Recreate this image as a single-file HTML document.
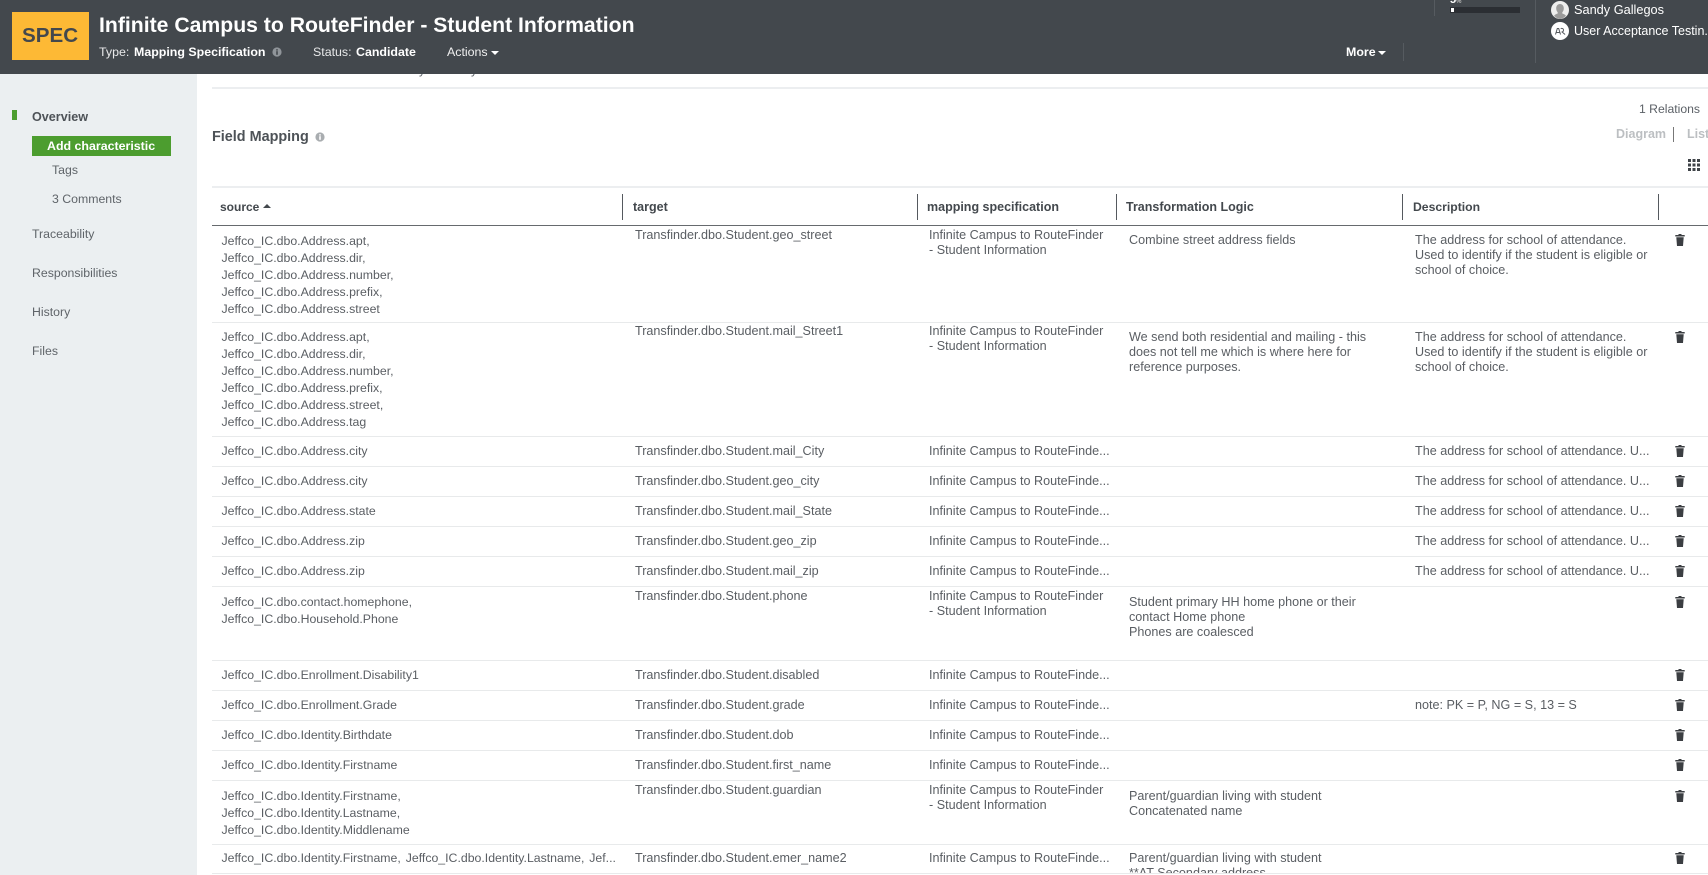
<!DOCTYPE html>
<html><head><meta charset="utf-8"><title>Infinite Campus to RouteFinder - Student Information</title>
<style>
html,body{margin:0;padding:0;background:#fff}
body{position:relative;width:1708px;height:875px;overflow:hidden;font-family:"Liberation Sans",sans-serif;color:#5c6167}
div,span,svg{position:absolute}
.x{white-space:nowrap;font-size:12.2px}
.s,.g,.m,.l,.d{white-space:nowrap;font-size:12.6px;color:#5a5e63}
.s{left:221.5px;line-height:17px;font-size:12.3px}
.g{left:635px;line-height:15px}
.m{left:929px;line-height:15px}
.l{left:1129px;line-height:15px}
.d{left:1415px;line-height:15px}
.r{left:212px;width:1496px;height:1px;background:#e8eaeb}
.h{font-size:12.5px;font-weight:bold;line-height:16px;top:199px;color:#43484d;white-space:nowrap}
.v{width:1px;top:194px;height:26px;background:#55595e}
.tr{left:1675px;width:10px;height:12px;fill:#3b3e42}
.nav{left:32px;font-size:12.3px;line-height:16px;white-space:nowrap;color:#5f6469}
.w{color:#fff;white-space:nowrap;font-size:12.4px;line-height:16px;top:44px}
</style></head><body>

<span style="left:419px;top:62px;font-size:12.2px;line-height:16px">y</span>
<span style="left:471px;top:62px;font-size:12.2px;line-height:16px">y</span>

<div style="left:0;top:0;width:1708px;height:74px;background:#43484d"></div>
<div style="left:12px;top:12px;width:77px;height:48px;background:#fdb935"></div>
<span style="left:22px;top:24px;font-size:20.6px;line-height:24px;font-weight:bold;color:#43484d">SPEC</span>
<span style="left:99px;top:13px;font-size:21.2px;line-height:26px;font-weight:bold;color:#fff;white-space:nowrap">Infinite Campus to RouteFinder - Student Information</span>
<span class="w" style="left:99px;color:#e8e9ea">Type:</span>
<span class="w" style="left:134px;font-weight:bold">Mapping Specification</span>
<svg style="left:272px;top:47px" width="10" height="10" viewBox="0 0 10 10"><circle cx="5" cy="5" r="4.6" fill="#90959a"/><rect x="4.2" y="4.2" width="1.6" height="3.6" fill="#43484d"/><rect x="4.2" y="2.2" width="1.6" height="1.4" fill="#43484d"/></svg>
<span class="w" style="left:313px;color:#e8e9ea">Status:</span>
<span class="w" style="left:356px;font-weight:bold">Candidate</span>
<span class="w" style="left:447px;color:#f0f0f0">Actions</span>
<div style="left:491px;top:51px;width:0;height:0;border-left:4px solid transparent;border-right:4px solid transparent;border-top:4px solid #fff"></div>
<span class="w" style="left:1346px;font-weight:bold">More</span>
<div style="left:1378px;top:51px;width:0;height:0;border-left:4px solid transparent;border-right:4px solid transparent;border-top:4px solid #fff"></div>
<div style="left:1403px;top:43px;width:1px;height:18px;background:#565b60"></div>
<div style="left:1434px;top:0;width:1px;height:16px;background:#565b60"></div>
<div style="left:1535px;top:0;width:1px;height:63px;background:#565b60"></div>
<div style="left:1450px;top:7px;width:70px;height:6px;background:#2b2e33"></div>
<div style="left:1451px;top:8px;width:3px;height:4px;background:#fff"></div>
<span style="left:1450px;top:-6px;font-size:11px;line-height:12px;font-weight:bold;color:#fff">5<span style="position:static;font-size:6px;color:#b8b8b8">%</span></span>
<svg style="left:1551px;top:1px" width="18" height="18" viewBox="0 0 18 18"><circle cx="9" cy="9" r="9" fill="#eee"/><path d="M9 3c2.4 0 3.8 1.8 3.8 4.4 0 1.6-.6 3-1.5 3.9v1.2c1.8.6 3.2 1.3 3.6 2.3A9 9 0 0 1 9 18a9 9 0 0 1-5.9-3.2c.4-1 1.8-1.7 3.6-2.3v-1.2C5.8 10.400 5.200 9 5.200 7.400 5.200 4.800 6.600 3 9 3z" fill="#9b9b9b"/></svg>
<svg style="left:1551px;top:22px" width="18" height="18" viewBox="0 0 18 18"><circle cx="9" cy="9" r="9" fill="#fff"/><path d="M4.500 12.500l1.800-6h1.400l1.800 6M5.300 10.500h3.400M9.700 6.500c1.500-.5 2.800.1 2.800 1.500s-1 2-2 2m.6 0l3 2.500" fill="none" stroke="#55595e" stroke-width="1"/></svg>
<span style="left:1574px;top:2px;font-size:12.75px;line-height:16px;color:#fff;white-space:nowrap">Sandy Gallegos</span>
<span style="left:1574px;top:23px;font-size:12.5px;line-height:16px;color:#fff;white-space:nowrap">User Acceptance Testin...</span>

<div style="left:0;top:74px;width:197px;height:801px;background:#ebeff1"></div>
<div style="left:12px;top:110px;width:5px;height:10px;background:#4c9d2f"></div>
<span class="nav" style="top:108.500px;font-weight:bold;font-size:12.600px;color:#4d5257">Overview</span>
<div style="left:32px;top:136px;width:139px;height:20px;background:#4c9d2f"></div>
<span style="left:47px;top:138px;font-size:12.4px;line-height:16px;font-weight:bold;color:#fff;white-space:nowrap">Add characteristic</span>
<span class="nav" style="left:52px;top:162px">Tags</span>
<span class="nav" style="left:52px;top:191px">3 Comments</span>
<span class="nav" style="top:225.500px">Traceability</span>
<span class="nav" style="top:264.500px">Responsibilities</span>
<span class="nav" style="top:303.500px">History</span>
<span class="nav" style="top:342.500px">Files</span>

<div style="left:212px;top:87px;width:1496px;height:2px;background:#eceef0"></div>
<span style="left:212px;top:128px;font-size:14.4px;line-height:18px;font-weight:bold;color:#4d5257;white-space:nowrap">Field Mapping</span>
<svg style="left:315px;top:132px" width="10" height="10" viewBox="0 0 10 10"><circle cx="5" cy="5" r="4.6" fill="#a9adb0"/><rect x="4.2" y="4.2" width="1.6" height="3.600" fill="#fff"/><rect x="4.2" y="2.2" width="1.6" height="1.4" fill="#fff"/></svg>
<span class="x" style="left:1639px;top:101px;line-height:16px">1 Relations</span>
<span style="left:1616px;top:126px;font-size:12.5px;line-height:16px;font-weight:bold;color:#bcbfc2">Diagram</span>
<div style="left:1673px;top:127px;width:1px;height:15px;background:#777"></div>
<span style="left:1687px;top:126px;font-size:12.5px;line-height:16px;font-weight:bold;color:#bcbfc2">List</span>
<svg style="left:1688px;top:159px" width="12" height="12" viewBox="0 0 12 12" fill="#3f4348"><rect width="3" height="3"/><rect x="4.500" width="3" height="3"/><rect x="9" width="3" height="3"/><rect y="4.500" width="3" height="3"/><rect x="4.500" y="4.500" width="3" height="3"/><rect x="9" y="4.500" width="3" height="3"/><rect y="9" width="3" height="3"/><rect x="4.500" y="9" width="3" height="3"/><rect x="9" y="9" width="3" height="3"/></svg>

<div style="left:212px;top:186px;width:1496px;height:2px;background:#eceef0"></div>
<div style="left:212px;top:225px;width:1496px;height:1px;background:#666a6e"></div>
<span class="h" style="left:220px;font-size:12px">source</span>
<div style="left:263px;top:204px;width:0;height:0;border-left:4px solid transparent;border-right:4px solid transparent;border-bottom:4px solid #43484d"></div>
<div class="v" style="left:622px"></div><span class="h" style="left:633px">target</span>
<div class="v" style="left:917px"></div><span class="h" style="left:927px">mapping specification</span>
<div class="v" style="left:1116px"></div><span class="h" style="left:1126px">Transformation Logic</span>
<div class="v" style="left:1402px"></div><span class="h" style="left:1413px;font-size:12.2px">Description</span>
<div class="v" style="left:1658px"></div>

<div class="r" style="top:322px"></div><div class="r" style="top:436px"></div><div class="r" style="top:466px"></div><div class="r" style="top:496px"></div><div class="r" style="top:526px"></div><div class="r" style="top:556px"></div><div class="r" style="top:586px"></div><div class="r" style="top:660px"></div><div class="r" style="top:690px"></div><div class="r" style="top:720px"></div><div class="r" style="top:750px"></div><div class="r" style="top:780px"></div><div class="r" style="top:844px"></div><div class="r" style="top:873px"></div>

<svg width="0" height="0" style="left:0;top:0"><symbol id="t" viewBox="0 0 10 12"><path d="M3.500 0h3v1h3.200v1.500H.3V1h3.200zM1.300 3.300h7.400L8 12H2z"/></symbol></svg>

<!-- row 1 -->
<div class="s" style="top:233px">Jeffco_IC.dbo.Address.apt,<br>Jeffco_IC.dbo.Address.dir,<br>Jeffco_IC.dbo.Address.number,<br>Jeffco_IC.dbo.Address.prefix,<br>Jeffco_IC.dbo.Address.street</div>
<div class="g" style="top:228px">Transfinder.dbo.Student.geo_street</div>
<div class="m" style="top:228px">Infinite Campus to RouteFinder<br>- Student Information</div>
<div class="l" style="top:233px">Combine street address fields</div>
<div class="d" style="top:233px">The address for school of attendance.<br>Used to identify if the student is eligible or<br>school of choice.</div>
<svg class="tr" style="top:234px"><use href="#t"/></svg>
<!-- row 2 -->
<div class="s" style="top:329px">Jeffco_IC.dbo.Address.apt,<br>Jeffco_IC.dbo.Address.dir,<br>Jeffco_IC.dbo.Address.number,<br>Jeffco_IC.dbo.Address.prefix,<br>Jeffco_IC.dbo.Address.street,<br>Jeffco_IC.dbo.Address.tag</div>
<div class="g" style="top:324px">Transfinder.dbo.Student.mail_Street1</div>
<div class="m" style="top:324px">Infinite Campus to RouteFinder<br>- Student Information</div>
<div class="l" style="top:330px">We send both residential and mailing - this<br>does not tell me which is where here for<br>reference purposes.</div>
<div class="d" style="top:330px">The address for school of attendance.<br>Used to identify if the student is eligible or<br>school of choice.</div>
<svg class="tr" style="top:331px"><use href="#t"/></svg>
<!-- row 3 -->
<div class="s" style="top:443px">Jeffco_IC.dbo.Address.city</div><div class="g" style="top:444px">Transfinder.dbo.Student.mail_City</div><div class="m" style="top:444px">Infinite Campus to RouteFinde...</div><div class="d" style="top:444px">The address for school of attendance. U...</div><svg class="tr" style="top:445px"><use href="#t"/></svg>
<!-- row 4 -->
<div class="s" style="top:473px">Jeffco_IC.dbo.Address.city</div><div class="g" style="top:474px">Transfinder.dbo.Student.geo_city</div><div class="m" style="top:474px">Infinite Campus to RouteFinde...</div><div class="d" style="top:474px">The address for school of attendance. U...</div><svg class="tr" style="top:475px"><use href="#t"/></svg>
<!-- row 5 -->
<div class="s" style="top:503px">Jeffco_IC.dbo.Address.state</div><div class="g" style="top:504px">Transfinder.dbo.Student.mail_State</div><div class="m" style="top:504px">Infinite Campus to RouteFinde...</div><div class="d" style="top:504px">The address for school of attendance. U...</div><svg class="tr" style="top:505px"><use href="#t"/></svg>
<!-- row 6 -->
<div class="s" style="top:533px">Jeffco_IC.dbo.Address.zip</div><div class="g" style="top:534px">Transfinder.dbo.Student.geo_zip</div><div class="m" style="top:534px">Infinite Campus to RouteFinde...</div><div class="d" style="top:534px">The address for school of attendance. U...</div><svg class="tr" style="top:535px"><use href="#t"/></svg>
<!-- row 7 -->
<div class="s" style="top:563px">Jeffco_IC.dbo.Address.zip</div><div class="g" style="top:564px">Transfinder.dbo.Student.mail_zip</div><div class="m" style="top:564px">Infinite Campus to RouteFinde...</div><div class="d" style="top:564px">The address for school of attendance. U...</div><svg class="tr" style="top:565px"><use href="#t"/></svg>
<!-- row 8 -->
<div class="s" style="top:594px">Jeffco_IC.dbo.contact.homephone,<br>Jeffco_IC.dbo.Household.Phone</div>
<div class="g" style="top:589px">Transfinder.dbo.Student.phone</div>
<div class="m" style="top:589px">Infinite Campus to RouteFinder<br>- Student Information</div>
<div class="l" style="top:595px">Student primary HH home phone or their<br>contact Home phone<br>Phones are coalesced</div>
<svg class="tr" style="top:596px"><use href="#t"/></svg>
<!-- row 9 -->
<div class="s" style="top:667px">Jeffco_IC.dbo.Enrollment.Disability1</div><div class="g" style="top:668px">Transfinder.dbo.Student.disabled</div><div class="m" style="top:668px">Infinite Campus to RouteFinde...</div><svg class="tr" style="top:669px"><use href="#t"/></svg>
<!-- row 10 -->
<div class="s" style="top:697px">Jeffco_IC.dbo.Enrollment.Grade</div><div class="g" style="top:698px">Transfinder.dbo.Student.grade</div><div class="m" style="top:698px">Infinite Campus to RouteFinde...</div><div class="d" style="top:698px">note: PK = P, NG = S, 13 = S</div><svg class="tr" style="top:699px"><use href="#t"/></svg>
<!-- row 11 -->
<div class="s" style="top:727px">Jeffco_IC.dbo.Identity.Birthdate</div><div class="g" style="top:728px">Transfinder.dbo.Student.dob</div><div class="m" style="top:728px">Infinite Campus to RouteFinde...</div><svg class="tr" style="top:729px"><use href="#t"/></svg>
<!-- row 12 -->
<div class="s" style="top:757px">Jeffco_IC.dbo.Identity.Firstname</div><div class="g" style="top:758px">Transfinder.dbo.Student.first_name</div><div class="m" style="top:758px">Infinite Campus to RouteFinde...</div><svg class="tr" style="top:759px"><use href="#t"/></svg>
<!-- row 13 -->
<div class="s" style="top:788px">Jeffco_IC.dbo.Identity.Firstname,<br>Jeffco_IC.dbo.Identity.Lastname,<br>Jeffco_IC.dbo.Identity.Middlename</div>
<div class="g" style="top:783px">Transfinder.dbo.Student.guardian</div>
<div class="m" style="top:783px">Infinite Campus to RouteFinder<br>- Student Information</div>
<div class="l" style="top:789px">Parent/guardian living with student<br>Concatenated name</div>
<svg class="tr" style="top:790px"><use href="#t"/></svg>
<!-- row 14 -->
<div class="s" style="top:850px;word-spacing:1.5px">Jeffco_IC.dbo.Identity.Firstname, Jeffco_IC.dbo.Identity.Lastname, Jef...</div>
<div class="g" style="top:851px">Transfinder.dbo.Student.emer_name2</div>
<div class="m" style="top:851px">Infinite Campus to RouteFinde...</div>
<div class="l" style="top:851px;height:22px;overflow:hidden">Parent/guardian living with student<br>**AT Secondary address</div>
<svg class="tr" style="top:852px"><use href="#t"/></svg>
</body></html>
